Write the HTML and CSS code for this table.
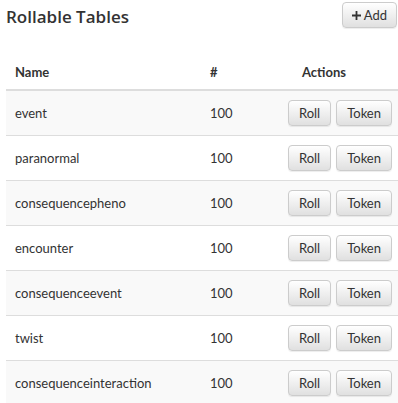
FILE: index.html
```html
<!DOCTYPE html>
<html lang="en">
<head>
    <meta charset="UTF-8">
    <title>Rollable Tables</title>
    <link rel="stylesheet" href="styles.css">
</head>
<body>
    <div class="page-header">
        <h1>Rollable Tables</h1>
        <button type="button" class="btn btn-add">
            <svg class="plus" viewBox="0 0 10 10" width="9" height="9"><path d="M4 0h2v4h4v2H6v4H4V6H0V4h4z"/></svg>Add
        </button>
    </div>

    <table class="tables-list">
        <thead>
            <tr>
                <th class="col-name">Name</th>
                <th class="col-count">#</th>
                <th class="col-actions">Actions</th>
            </tr>
        </thead>
        <tbody>
            <tr><td>event</td><td>100</td><td class="actions"><button class="btn">Roll</button><button class="btn">Token</button></td></tr>
            <tr><td>paranormal</td><td>100</td><td class="actions"><button class="btn">Roll</button><button class="btn">Token</button></td></tr>
            <tr><td>consequencepheno</td><td>100</td><td class="actions"><button class="btn">Roll</button><button class="btn">Token</button></td></tr>
            <tr><td>encounter</td><td>100</td><td class="actions"><button class="btn">Roll</button><button class="btn">Token</button></td></tr>
            <tr><td>consequenceevent</td><td>100</td><td class="actions"><button class="btn">Roll</button><button class="btn">Token</button></td></tr>
            <tr><td>twist</td><td>100</td><td class="actions"><button class="btn">Roll</button><button class="btn">Token</button></td></tr>
            <tr><td>consequenceinteraction</td><td>100</td><td class="actions"><button class="btn">Roll</button><button class="btn">Token</button></td></tr>
        </tbody>
    </table>
</body>
</html>
```

FILE: styles.css
```css
body {
    margin: 0;
    padding: 0 0 0 6px;
    font-family: 'Lato', sans-serif;
    font-size: 13px;
    color: #333;
    background-color: #fff;
}

/* Header */
.page-header {
    display: flex;
    justify-content: space-between;
    align-items: center;
    height: 32px;
}

.page-header h1 {
    margin: 0;
    font-family: 'Open Sans', sans-serif;
    font-size: 17px;
    font-weight: 600;
    color: #333;
}

.btn {
    display: inline-flex;
    align-items: center;
    height: 26px;
    padding: 0 10px;
    font-family: 'Lato', sans-serif;
    font-size: 13px;
    color: #333;
    border: 1px solid #ccc;
    border-radius: 4px;
    background: linear-gradient(to bottom, #fff 0%, #e0e0e0 100%);
    box-shadow: inset 0 1px 0 rgba(255,255,255,.15), 0 1px 1px rgba(0,0,0,.075);
    cursor: pointer;
    box-sizing: border-box;
}

.btn-add {
    margin-right: 1px;
    padding: 0 9px;
    margin-top: -2px;
}

.plus {
    margin-right: 3px;
    fill: #333;
}

/* Table */
.tables-list {
    width: 392px;
    margin-top: 23px;
    border-collapse: collapse;
}

.tables-list th {
    height: 34px;
    padding: 0 9px;
    text-align: left;
    font-weight: 700;
    border-bottom: 2px solid #ddd;
}

.col-name { width: 177px; }
.col-count { width: 31px; }
.col-actions { text-align: center !important; }

.tables-list td {
    height: 44px;
    padding: 0 9px;
    border-top: 1px solid #ddd;
}

.tables-list tbody tr:nth-child(odd) {
    background-color: #f9f9f9;
}

.tables-list thead + tbody tr:first-child td {
    border-top: none;
}

td.actions {
    text-align: right;
    padding-right: 6px;
}

td.actions .btn + .btn {
    margin-left: 5px;
}
```
